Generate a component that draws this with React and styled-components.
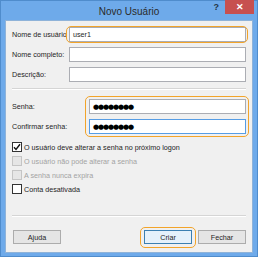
import styled, { createGlobalStyle } from 'styled-components';

const Global = createGlobalStyle`
    html, body {
        margin: 0;
        padding: 0;
        background: #ffffff;
    }
    body {
        font-family: "Liberation Sans", Arial, sans-serif;
    }
`;

const Window = styled.div`
    width: 258px;
    height: 257px;
    box-sizing: border-box;
    background: #6eaaea;
    border: 1px solid #4f8ccc;
    display: flex;
    flex-direction: column;
`;

const TitleBar = styled.div`
    height: 19px;
    display: flex;
    align-items: center;
    position: relative;

    > h1 {
        flex: 1;
        margin: 0;
        text-align: center;
        font-size: 10px;
        font-weight: normal;
        color: #2b2b2b;
        padding-top: 1px;
    }
`;

const Help = styled.span`
    position: absolute;
    right: 38px;
    top: 1px;
    font-size: 9px;
    font-weight: bold;
    color: #253545;
`;

const Close = styled.span`
    position: absolute;
    right: 3px;
    top: -1px;
    width: 29px;
    height: 14px;
    background: #c75050;
    color: #ffffff;
    font-size: 9px;
    font-weight: bold;
    display: flex;
    align-items: center;
    justify-content: center;
`;

const Panel = styled.div`
    flex: 1;
    margin: 0 4px 3px 4px;
    background: #f0f0f0;
    border: 1px solid #8fb3d9;
    padding: 6px 6px 0 6px;
    display: flex;
    flex-direction: column;
    font-size: 7.2px;
    color: #1e1e1e;
`;

const Fields = styled.div`
    display: grid;
    grid-template-columns: ${({ $label }) => $label}px 1fr;
    row-gap: 5px;
    align-items: center;
    position: relative;
`;

const Label = styled.label`
    white-space: nowrap;
`;

const Input = styled.div`
    height: 15px;
    box-sizing: border-box;
    background: #ffffff;
    border: 1px solid ${({ $focus }) => ($focus ? '#569de5' : '#abadb3')};
    display: flex;
    align-items: center;
    padding-left: 3px;
    position: relative;
`;

const Glow = styled.div`
    position: absolute;
    left: ${({ $l }) => $l}px;
    right: -3px;
    top: ${({ $v }) => $v}px;
    bottom: ${({ $v }) => $v}px;
    border: 1.5px solid #f2a42a;
    border-radius: 5px;
    pointer-events: none;
`;

const Dots = styled.span`
    font-size: 7px;
    letter-spacing: -1.1px;
    color: #000000;
    font-family: "DejaVu Sans", sans-serif;
`;

const Separator = styled.hr`
    border: none;
    border-top: 1px solid #d5d5d5;
    border-bottom: 1px solid #ffffff;
    margin: ${({ $m }) => $m};
`;

const Checks = styled.div`
    display: flex;
    flex-direction: column;
    gap: 4px;
    margin-top: 8px;
`;

const CheckRow = styled.div`
    display: flex;
    align-items: center;
    gap: 2px;
    height: 10px;
    color: ${({ $disabled }) => ($disabled ? '#a3a3a3' : '#1e1e1e')};
`;

const Box = styled.span`
    width: 10px;
    height: 10px;
    box-sizing: border-box;
    border: 1px solid ${({ $disabled }) => ($disabled ? '#c5c5c5' : '#333333')};
    background: ${({ $disabled }) => ($disabled ? '#e6e6e6' : '#ffffff')};
    display: flex;
    align-items: center;
    justify-content: center;
`;

const Buttons = styled.div`
    display: flex;
    gap: 6px;
    margin-top: 13px;

    > :first-child {
        margin-right: auto;
    }
`;

const ButtonWrap = styled.div`
    position: relative;
`;

const Button = styled.div`
    width: 48px;
    height: 14px;
    box-sizing: border-box;
    border: 1px solid ${({ $primary }) => ($primary ? '#3c7fb1' : '#acacac')};
    background: ${({ $primary }) => ($primary ? '#e5f1fb' : '#e5e5e5')};
    display: flex;
    align-items: center;
    justify-content: center;
    margin-left: ${({ $l }) => $l || 0}px;
`;

const ButtonGlow = styled.div`
    position: absolute;
    inset: -3px -4px -4px -4px;
    border: 1.5px solid #f2a42a;
    border-radius: 5px;
`;

const Check = ({ checked, disabled, children }) => (
    <CheckRow $disabled={disabled}>
        <Box $disabled={disabled}>
            {checked && (
                <svg width="8" height="8" viewBox="0 0 8 8">
                    <path d="M1 4.2 L3 6.4 L7 1.2" fill="none" stroke="#111" strokeWidth="1.4" />
                </svg>
            )}
        </Box>
        {children}
    </CheckRow>
);

export default function App() {
    return (
        <>
            <Global />
            <Window>
                <TitleBar>
                    <h1>Novo Usuário</h1>
                    <Help>?</Help>
                    <Close>✕</Close>
                </TitleBar>
                <Panel>
                    <Fields $label={57}>
                        <Label>Nome de usuário</Label>
                        <Input>
                            user1
                            <Glow $l={-4} $v={-2} />
                        </Input>
                        <Label>Nome completo:</Label>
                        <Input />
                        <Label>Descrição:</Label>
                        <Input />
                    </Fields>

                    <Separator $m="6px 0 9px 0" />

                    <Fields $label={77}>
                        <Glow $l={73} $v={-3} />
                        <Label>Senha:</Label>
                        <Input>
                            <Dots>●●●●●●●●</Dots>
                        </Input>
                        <Label>Confirmar senha:</Label>
                        <Input $focus>
                            <Dots>●●●●●●●●</Dots>
                        </Input>
                    </Fields>

                    <Checks>
                        <Check checked>O usuário deve alterar a senha no próximo logon</Check>
                        <Check disabled>O usuário não pode alterar a senha</Check>
                        <Check disabled>A senha nunca expira</Check>
                        <Check>Conta desativada</Check>
                    </Checks>

                    <Separator $m="21px 0 0 0" />

                    <Buttons>
                        <Button $l={1}>Ajuda</Button>
                        <ButtonWrap>
                            <Button $primary>Criar</Button>
                            <ButtonGlow />
                        </ButtonWrap>
                        <Button>Fechar</Button>
                    </Buttons>
                </Panel>
            </Window>
        </>
    );
}
